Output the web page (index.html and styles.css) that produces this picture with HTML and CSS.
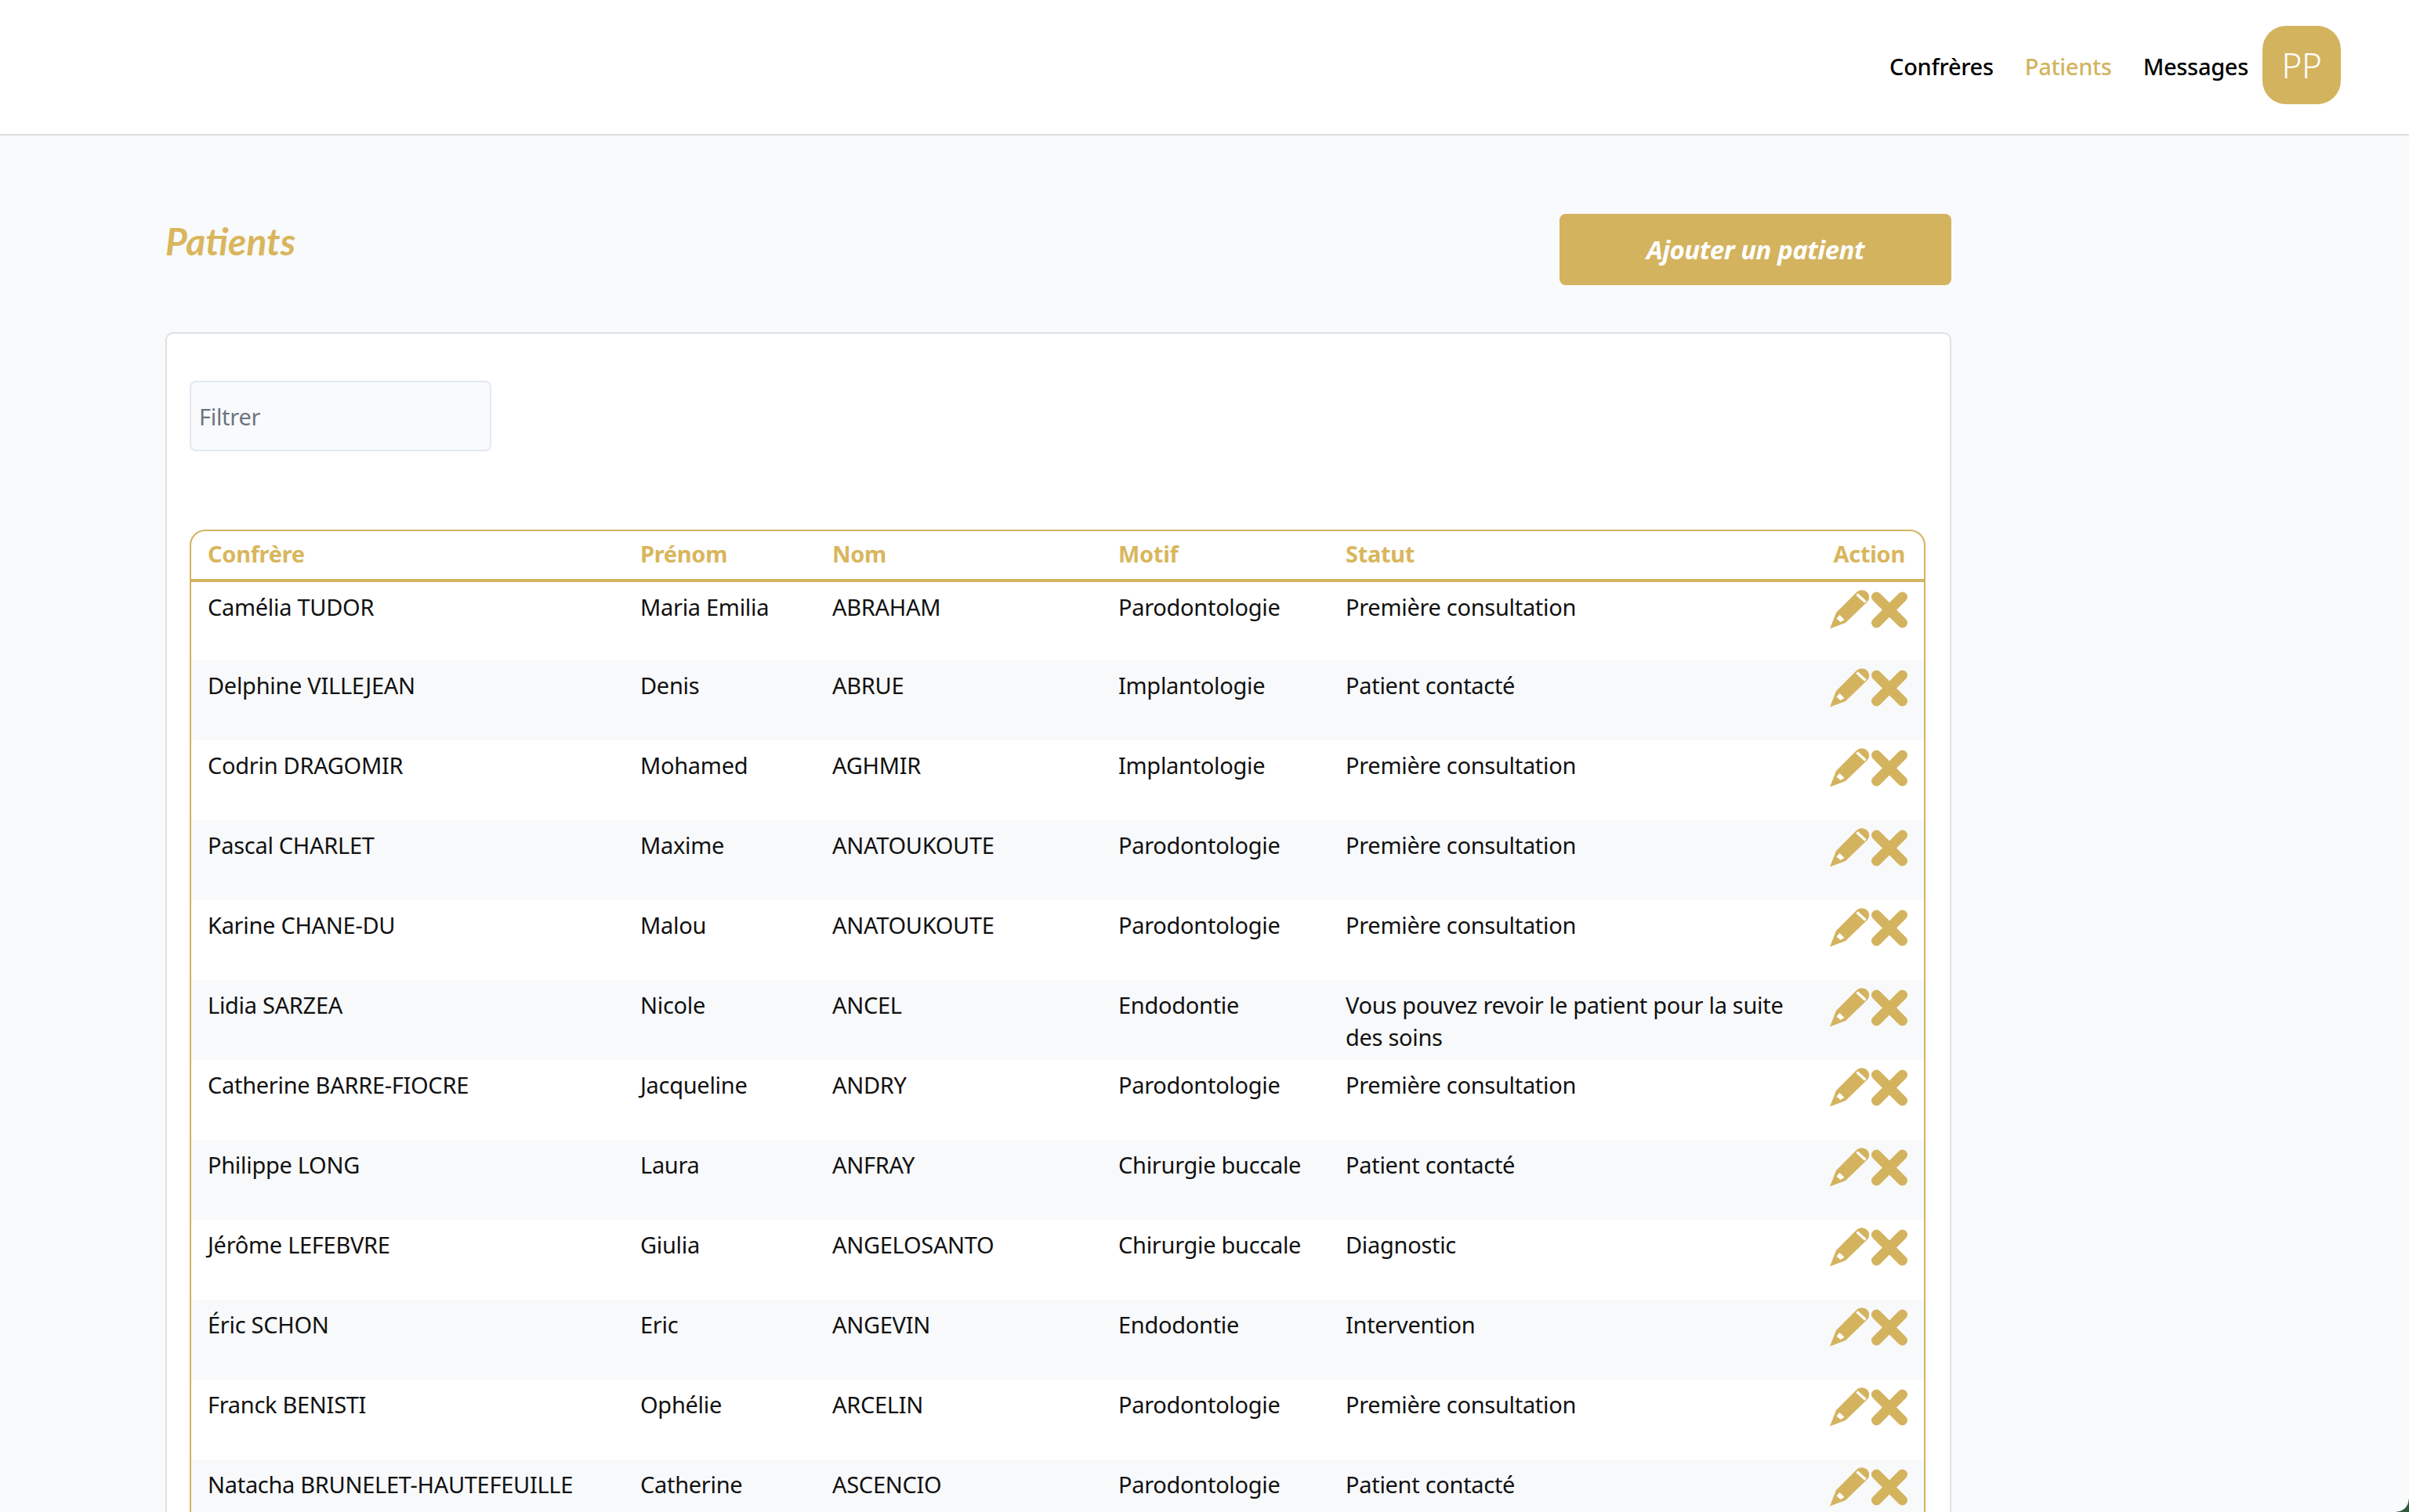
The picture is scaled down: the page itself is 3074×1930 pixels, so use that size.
FILE: index.html
```html
<!DOCTYPE html>
<html lang="fr">
<head>
    <meta charset="UTF-8">
    <title>Patients</title>
    <link rel="stylesheet" href="styles.css">
</head>
<body>
    <svg class="defs" width="0" height="0">
        <symbol id="icon-edit" viewBox="0 0 50 50">
            <path d="M0 49.5 8 29 34 3C38-1 44-.5 47.500 3 51 6.500 51 12 47.500 15.500L20 42Z" fill="#d4b35f"/>
            <path d="M34.500 5.500 45.500 15.500" stroke="#fff" stroke-width="3.500"/>
            <path d="M8.500 36.500 12.500 32 18.500 38 13.500 41Z" fill="#fff"/>
        </symbol>
        <symbol id="icon-delete" viewBox="0 0 48 48">
            <path d="M7.500 7 40.500 40M40.500 7 7.500 40" stroke="#d4b35f" stroke-width="13" stroke-linecap="round"/>
        </symbol>
    </svg>

    <header class="topbar">
        <nav class="topnav">
            <a class="topnav-link">Confrères</a>
            <a class="topnav-link active">Patients</a>
            <a class="topnav-link">Messages</a>
        </nav>
        <div class="avatar">PP</div>
    </header>

    <main class="content">
        <div class="page-head">
            <h1 class="page-title">Patients</h1>
            <button class="btn-add">Ajouter un patient</button>
        </div>

        <section class="card">
            <input class="filter" type="text" placeholder="Filtrer">

            <div class="table-wrap">
                <table class="patients">
                    <colgroup>
                        <col class="c-confrere"><col class="c-prenom"><col class="c-nom"><col class="c-motif"><col class="c-statut"><col class="c-action">
                    </colgroup>
                    <thead>
                        <tr><th>Confrère</th><th>Prénom</th><th>Nom</th><th>Motif</th><th>Statut</th><th class="th-action">Action</th></tr>
                    </thead>
                    <tbody id="rows">
                        <tr><td>Camélia TUDOR</td><td>Maria Emilia</td><td>ABRAHAM</td><td>Parodontologie</td><td>Première consultation</td><td class="td-action"><svg class="ic-edit"><use href="#icon-edit"/></svg><svg class="ic-del"><use href="#icon-delete"/></svg></td></tr>
                        <tr><td>Delphine VILLEJEAN</td><td>Denis</td><td>ABRUE</td><td>Implantologie</td><td>Patient contacté</td><td class="td-action"><svg class="ic-edit"><use href="#icon-edit"/></svg><svg class="ic-del"><use href="#icon-delete"/></svg></td></tr>
                        <tr><td>Codrin DRAGOMIR</td><td>Mohamed</td><td>AGHMIR</td><td>Implantologie</td><td>Première consultation</td><td class="td-action"><svg class="ic-edit"><use href="#icon-edit"/></svg><svg class="ic-del"><use href="#icon-delete"/></svg></td></tr>
                        <tr><td>Pascal CHARLET</td><td>Maxime</td><td>ANATOUKOUTE</td><td>Parodontologie</td><td>Première consultation</td><td class="td-action"><svg class="ic-edit"><use href="#icon-edit"/></svg><svg class="ic-del"><use href="#icon-delete"/></svg></td></tr>
                        <tr><td>Karine CHANE-DU</td><td>Malou</td><td>ANATOUKOUTE</td><td>Parodontologie</td><td>Première consultation</td><td class="td-action"><svg class="ic-edit"><use href="#icon-edit"/></svg><svg class="ic-del"><use href="#icon-delete"/></svg></td></tr>
                        <tr><td>Lidia SARZEA</td><td>Nicole</td><td>ANCEL</td><td>Endodontie</td><td>Vous pouvez revoir le patient pour la suite des soins</td><td class="td-action"><svg class="ic-edit"><use href="#icon-edit"/></svg><svg class="ic-del"><use href="#icon-delete"/></svg></td></tr>
                        <tr><td>Catherine BARRE-FIOCRE</td><td>Jacqueline</td><td>ANDRY</td><td>Parodontologie</td><td>Première consultation</td><td class="td-action"><svg class="ic-edit"><use href="#icon-edit"/></svg><svg class="ic-del"><use href="#icon-delete"/></svg></td></tr>
                        <tr><td>Philippe LONG</td><td>Laura</td><td>ANFRAY</td><td>Chirurgie buccale</td><td>Patient contacté</td><td class="td-action"><svg class="ic-edit"><use href="#icon-edit"/></svg><svg class="ic-del"><use href="#icon-delete"/></svg></td></tr>
                        <tr><td>Jérôme LEFEBVRE</td><td>Giulia</td><td>ANGELOSANTO</td><td>Chirurgie buccale</td><td>Diagnostic</td><td class="td-action"><svg class="ic-edit"><use href="#icon-edit"/></svg><svg class="ic-del"><use href="#icon-delete"/></svg></td></tr>
                        <tr><td>Éric SCHON</td><td>Eric</td><td>ANGEVIN</td><td>Endodontie</td><td>Intervention</td><td class="td-action"><svg class="ic-edit"><use href="#icon-edit"/></svg><svg class="ic-del"><use href="#icon-delete"/></svg></td></tr>
                        <tr><td>Franck BENISTI</td><td>Ophélie</td><td>ARCELIN</td><td>Parodontologie</td><td>Première consultation</td><td class="td-action"><svg class="ic-edit"><use href="#icon-edit"/></svg><svg class="ic-del"><use href="#icon-delete"/></svg></td></tr>
                        <tr><td>Natacha BRUNELET-HAUTEFEUILLE</td><td>Catherine</td><td>ASCENCIO</td><td>Parodontologie</td><td>Patient contacté</td><td class="td-action"><svg class="ic-edit"><use href="#icon-edit"/></svg><svg class="ic-del"><use href="#icon-delete"/></svg></td></tr>
                    </tbody>
                </table>
            </div>
        </section>
    </main>
    <div class="corner"></div>
</body>
</html>
```

FILE: styles.css
```css
html, body {
    height: 1930px;
    overflow: hidden;
}
body {
    margin: 0;
    font-family: "Noto Sans", sans-serif;
    font-size: 29px;
    letter-spacing: -0.3px;
    line-height: 41px;
    color: #111;
    background-color: #f9fafc;
}
.defs {
    position: absolute;
}
.topbar {
    display: flex;
    justify-content: flex-end;
    align-items: center;
    height: 171px;
    padding-right: 87px;
    background: white;
    border-bottom: 2px solid #dcdcdc;
}
.topnav {
    display: flex;
    margin-top: -2px;
}
.topnav-link {
    padding: 0 20px;
    font-weight: 500;
    color: #000;
}
.topnav-link:last-child {
    padding-right: 18px;
}
.topnav-link.active {
    color: #d4b35f;
}
.avatar {
    display: flex;
    justify-content: center;
    align-items: center;
    width: 100px;
    height: 100px;
    margin-top: -5px;
    border-radius: 30px;
    background-color: #d4b35f;
    color: #fff;
    font-size: 44px;
    font-weight: 300;
}
.content {
    width: 2279px;
    margin-left: 211px;
}
.page-head {
    display: flex;
    justify-content: space-between;
    align-items: flex-start;
    padding-top: 100px;
    margin-bottom: 60px;
}
.page-title {
    margin: 0;
    padding-top: 5px;
    font-family: "Lato", sans-serif;
    font-size: 48px;
    line-height: 60px;
    font-style: italic;
    font-weight: 700;
    letter-spacing: 0;
    color: #d9b65d;
}
.btn-add {
    width: 500px;
    height: 91px;
    border: none;
    border-radius: 8px;
    background-color: #d4b35f;
    color: #fff;
    font-family: inherit;
    font-size: 33px;
    letter-spacing: -0.5px;
    font-style: italic;
    font-weight: 700;
}
.card {
    padding: 60px 29px 0;
    background: white;
    border: 2px solid #dee2e6;
    border-radius: 10px;
}
.filter {
    display: block;
    box-sizing: border-box;
    width: 385px;
    height: 90px;
    padding: 0 10px;
    border: 2px solid #e2e8f0;
    border-radius: 8px;
    background-color: #f8fafd;
    font-family: inherit;
    font-size: 29px;
    letter-spacing: -0.3px;
}
.filter::placeholder {
    color: #6c757d;
    opacity: 1;
}
.table-wrap {
    margin-top: 100px;
    border: 2px solid #d4b35f;
    border-bottom: none;
    border-radius: 20px 20px 0 0;
    width: 2211px;
}
.patients {
    width: 2211px;
    table-layout: fixed;
    border-collapse: collapse;
}
.c-confrere { width: 552px; }
.c-prenom { width: 245px; }
.c-nom { width: 365px; }
.c-motif { width: 290px; }
.c-statut { width: 624px; }
.c-action { width: 135px; }
.patients th {
    height: 49px;
    padding: 0 21px 12px;
    text-align: left;
    vertical-align: bottom;
    font-weight: 700;
    color: #d9b65d;
    border-bottom: 4px solid #d4b35f;
}
.patients th.th-action {
    padding: 0 24px 12px 0;
    text-align: right;
}
.patients td {
    height: 102px;
    box-sizing: border-box;
    padding: 11px 21px 9px;
    vertical-align: top;
}
.patients tbody tr:nth-child(even) {
    background-color: #f8f9fb;
}
.patients td.td-action {
    padding: 10px 20px 0 0;
    text-align: right;
    white-space: nowrap;
    font-size: 0;
    line-height: 0;
}
.ic-edit {
    width: 50px;
    height: 50px;
}
.ic-del {
    width: 48px;
    height: 48px;
    margin-left: 2px;
}
.corner {
    position: fixed;
    right: 0;
    bottom: 0;
    width: 16px;
    height: 16px;
    background: radial-gradient(circle at 0 0, transparent 15px, #2d5a3c 16px);
}
```
